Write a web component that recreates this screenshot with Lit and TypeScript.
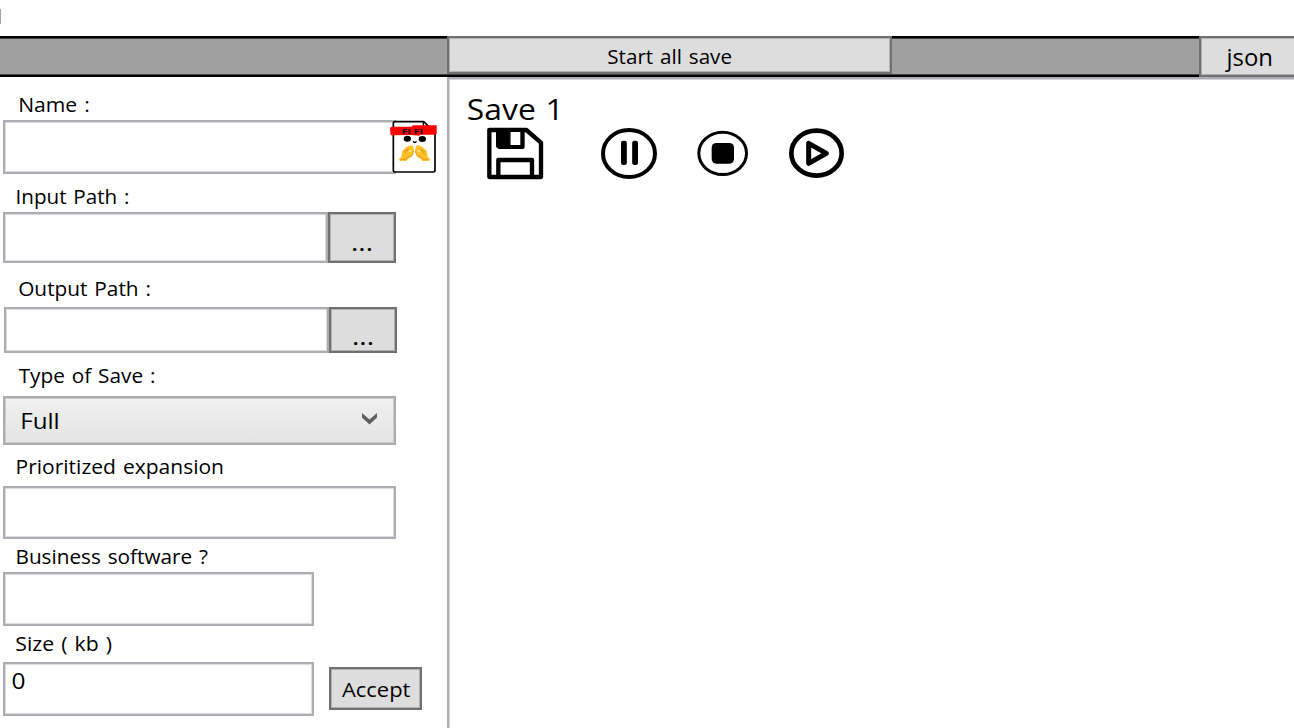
import { LitElement, html, svg, css } from "lit";
import { customElement } from "lit/decorators.js";

// Text fitted to an exact width; x and y are the ink start and baseline inside its box.
const fitted = (text: string, x: number, y: number, width: number, size: number) => html`
  <svg class="fitted" width="1" height="1" role="text">
    <text x=${x} y=${y} font-size=${size} textLength=${width} lengthAdjust="spacingAndGlyphs">${text}</text>
  </svg>`;

@customElement("save-actions")
class SaveActions extends LitElement {
  static styles = css`
    :host { display: flex; height: 66px; }
    svg { display: block; flex: none; }
  `;
  render() {
    return html`
      <svg width="100" height="66" viewBox="0 0 300 198">
        <path d="M28 30H139L183 68V171H28Z" fill="none" stroke="#000" stroke-width="13" stroke-linejoin="round"/>
        <path d="M48 32H134V81Q134 87 128 87H56L48 80Z"/>
        <path d="M92 36H121V75H92Z" fill="#fff"/>
        <path d="M91 38V74" stroke="#888" stroke-width="2"/>
        <path d="M55 168V120H156V168" fill="none" stroke="#000" stroke-width="13" stroke-linejoin="round"/>
      </svg>
      <svg width="100" height="66" viewBox="300 0 300 198">
        <ellipse cx="447" cy="100.5" rx="78" ry="70.5" fill="none" stroke="#000" stroke-width="12"/>
        <rect x="423" y="62" width="17.5" height="73" rx="7"/>
        <rect x="456.500" y="62" width="17.5" height="73" rx="7"/>
      </svg>
      <svg width="90" height="66" viewBox="0 0 270 198">
        <ellipse cx="128" cy="100" rx="71.500" ry="63.500" fill="none" stroke="#000" stroke-width="9"/>
        <rect x="95" y="69" width="67" height="62" rx="14"/>
      </svg>
      <svg width="90" height="66" viewBox="270 0 270 198">
        <ellipse cx="409.500" cy="99.500" rx="75.500" ry="67.500" fill="none" stroke="#000" stroke-width="14"/>
        <path d="M386 70L439 100L386 130Z" fill="none" stroke="#000" stroke-width="15" stroke-linejoin="round"/>
      </svg>`;
  }
}

@customElement("fifi-mascot")
class FifiMascot extends LitElement {
  static styles = css`
    :host, svg { display: block; }
    text { font: bold 20px "DejaVu Sans", sans-serif; }
  `;
  render() {
    return html`
      <svg width="60" height="66" viewBox="0 0 180 198">
        <path d="M33 23H119L153 55V169Q153 174 148 174H33Q28 174 28 169V28Q28 23 33 23Z" fill="#fff" stroke="#000" stroke-width="5"/>
        <path d="M118 23V42H138" fill="none" stroke="#000" stroke-width="4"/>
        <path d="M22 38L84 38L86 34H158V60L150 62H108L106 65L80 63L20 64L18 43Z" fill="#f00"/>
        <text x="53" y="59" textLength="64" lengthAdjust="spacingAndGlyphs">FI FI</text>
        <ellipse cx="70" cy="74.500" rx="11" ry="9"/>
        <ellipse cx="115" cy="75" rx="11" ry="9"/>
        <path d="M87 81L90 85H95L97 81" fill="none" stroke="#000" stroke-width="3.5"/>
        ${this.hand("")}
        ${this.hand("translate(183 0) scale(-1 1)")}
      </svg>`;
  }
  hand(transform: string) {
    return svg`<g transform=${transform}>
      <path d="M42 137L52 128L55 112L67 99L82 93L88 98L90 111L83 128L73 134L67 141L46 140L51 136Z" fill="#ffc125"/>
      <path d="M47 138L67 135L71 130L83 126L89 112M58 112L72 107M60 122L76 103" fill="none" stroke="#e69a18" stroke-width="3"/>
      <circle cx="78" cy="111" r="3" fill="#fff0c0"/>
    </g>`;
  }
}

@customElement("app-root")
class AppRoot extends LitElement {
  static styles = css`
    :host {
      display: flex; flex-direction: column; box-sizing: border-box;
      width: 1294px; height: 728px; overflow: hidden; background: #fff;
      font-family: "Open Sans", "Noto Sans", sans-serif; color: #000;
    }
    * { box-sizing: border-box; }
    .fitted { display: block; overflow: visible; flex: none; word-spacing: 0.09em; }
    .title { height: 36px; flex: none; padding-top: 9px; }
    .sliver { width: 1px; height: 15px; background: #a0a2a8; }
    .bar {
      height: 41px; flex: none; display: flex; background: #a0a0a0;
      box-shadow: inset 0 2px #000, inset 0 -2px #000, inset 0 3px #444, inset 0 -3px #444;
    }
    .btn {
      background: #ddd; border: 2px solid #707070; flex: none;
      box-shadow: inset 0 0 0 1px #b0b0b0; display: block;
    }
    .start { width: 445px; height: 38px; margin-left: 447px; }
    .json { width: 100px; height: 41px; margin-left: 307px; }
    .body { display: flex; flex: 1; min-height: 0; }
    .form { width: 447px; flex: none; padding-left: 3px; }
    .list {
      flex: 1; border: solid #abadb3; border-width: 2px 0 0 2px;
      box-shadow: inset 1px 1px #d5d6d9;
    }
    .row { display: flex; position: relative; }
    .row.shifted { margin-left: 1px; }
    .box {
      width: 393px; flex: none; background: #fff; border: 2px solid #abadb3;
      box-shadow: inset 0 0 0 1px #dcdde0;
    }
    .path { width: 325px; }
    .short { width: 311px; }
    .browse { width: 68px; }
    .select {
      width: 393px; height: 49px; border: 2px solid #acacac; display: flex;
      background: linear-gradient(#f0f0f0, #e4e4e4); box-shadow: inset 0 0 0 1px #ccc;
    }
    .chevron { margin: 13px 0 0 354px; display: block; }
    .accept { width: 93px; height: 43px; margin: 5px 0 0 15px; }
    .mascot { position: absolute; left: 381px; top: -6px; }
    .h43 { height: 43px; } .h38 { height: 38px; } .h44 { height: 44px; }
    .h41 { height: 41px; } .h33 { height: 33px; } .h36 { height: 36px; }
    .h46 { height: 46px; } .h51 { height: 51px; } .h53 { height: 53px; } .h54 { height: 54px; }
    .save-title { height: 41px; }
    .actions { margin-left: 31px; }
  `;
  render() {
    return html`
      <div class="title"><div class="sliver"></div></div>
      <div class="bar">
        <div class="btn start">${fitted("Start all save", 158.3, 26, 124.7, 20)}</div>
        <div class="btn json">${fitted("json", 25.5, 28, 46.5, 23)}</div>
      </div>
      <div class="body">
        <div class="form">
          <div class="h43">${fitted("Name :", 15.2, 35, 71.6, 20)}</div>
          <div class="row">
            <div class="box h54"></div>
            <fifi-mascot class="mascot"></fifi-mascot>
          </div>
          <div class="h38">${fitted("Input Path :", 12.5, 30, 114, 20)}</div>
          <div class="row">
            <div class="box path h51"></div>
            <div class="btn browse h51">${fitted("...", 21, 37, 22, 24)}</div>
          </div>
          <div class="h44">${fitted("Output Path :", 15.2, 33, 132.8, 20)}</div>
          <div class="row shifted">
            <div class="box path h46"></div>
            <div class="btn browse h46">${fitted("...", 21, 36, 22, 24)}</div>
          </div>
          <div class="h43">${fitted("Type of Save :", 15.7, 30, 136.7, 20)}</div>
          <div class="select">
            ${fitted("Full", 15.2, 31, 39.5, 22)}
            <svg class="chevron" width="20" height="18" viewBox="0 0 20 18">
              <path d="M2 2L9.500 8.500L17 2V6.500L9.500 13.500L2 6.500Z" fill="#606060"/>
            </svg>
          </div>
          <div class="h41">${fitted("Prioritized expansion", 12.5, 29, 208.5, 20)}</div>
          <div class="box h53"></div>
          <div class="h33">${fitted("Business software ?", 12.5, 25, 192.5, 20)}</div>
          <div class="box short h54"></div>
          <div class="h36">${fitted("Size ( kb )", 12.3, 25, 96.7, 20)}</div>
          <div class="row">
            <div class="box short h54">${fitted("0", 6.5, 25, 14, 22)}</div>
            <div class="btn accept">${fitted("Accept", 11, 28, 68.4, 19.5)}</div>
          </div>
        </div>
        <div class="list">
          <div class="save-title">${fitted("Save 1", 17.8, 41, 97, 30)}</div>
          <save-actions class="actions"></save-actions>
        </div>
      </div>`;
  }
}
